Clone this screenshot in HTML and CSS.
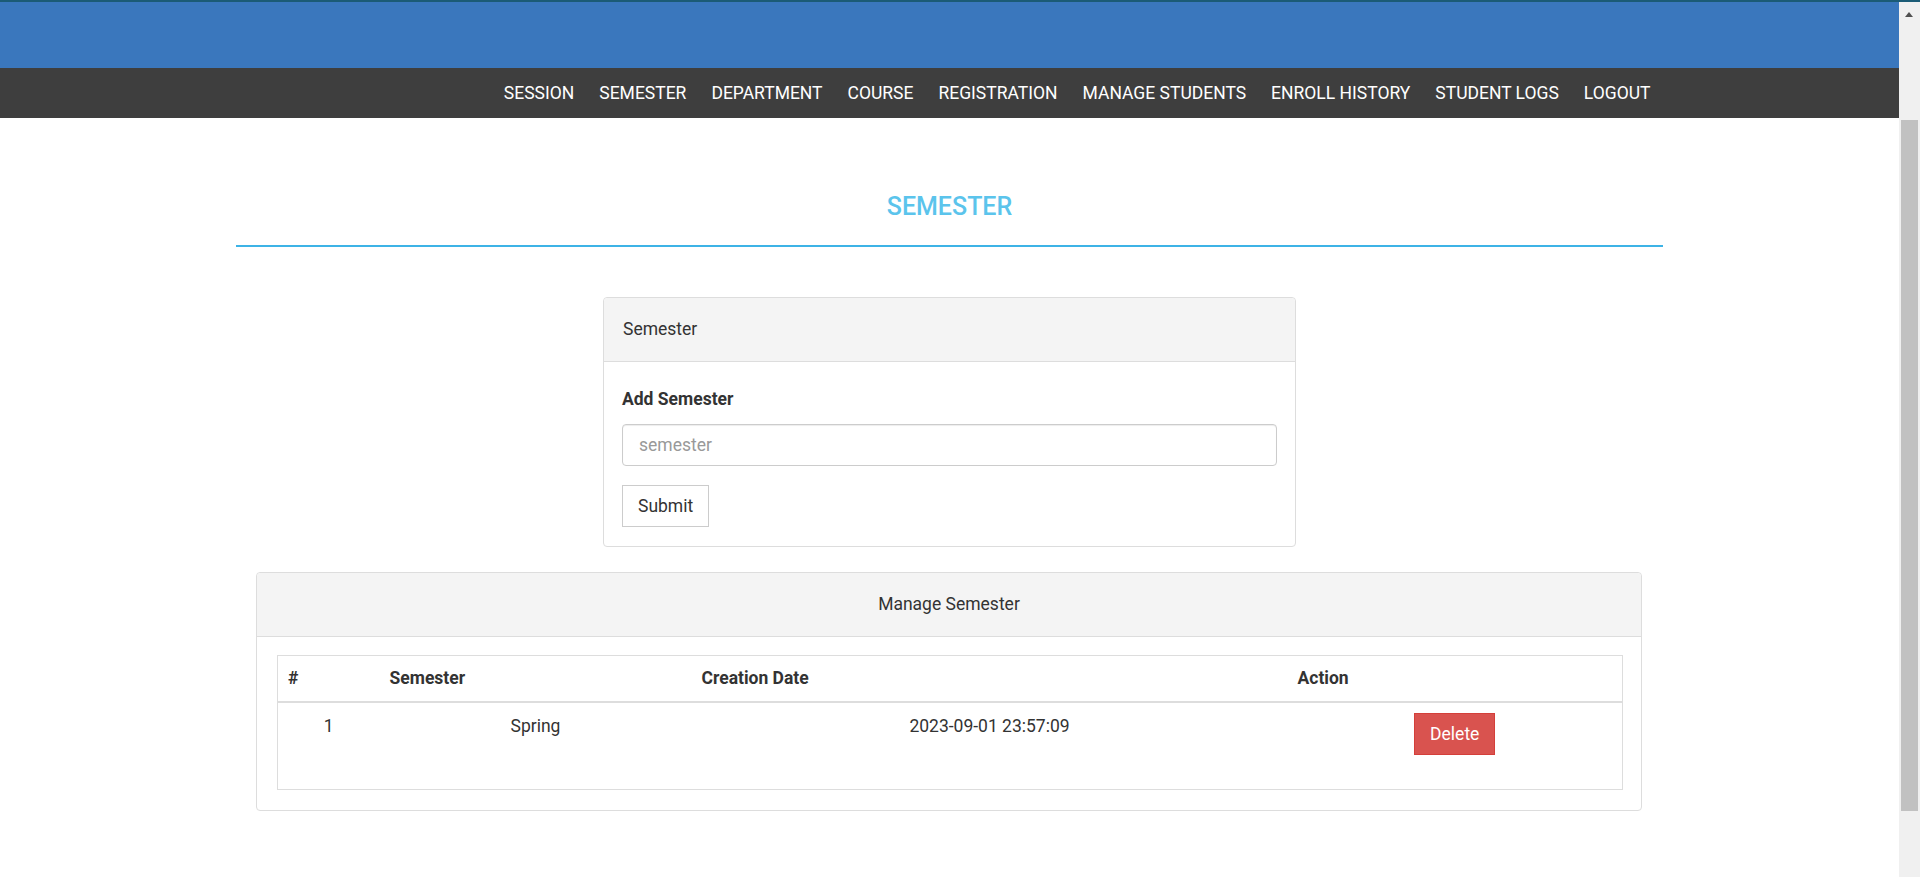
FILE: index.html
```html
<!DOCTYPE html>
<html lang="en">
<head>
<meta charset="utf-8">
<title>Semester</title>
<link rel="stylesheet" href="styles.css">
</head>
<body>
<div class="topline"></div>
<div class="frame">
  <div class="page">
    <header class="brandbar"></header>
    <nav class="menu">
      <div class="container">
        <ul class="menu-list">
          <li><a href="#">SESSION</a></li>
          <li><a href="#">SEMESTER</a></li>
          <li><a href="#">DEPARTMENT</a></li>
          <li><a href="#">COURSE</a></li>
          <li><a href="#">REGISTRATION</a></li>
          <li><a href="#">MANAGE STUDENTS</a></li>
          <li><a href="#">ENROLL HISTORY</a></li>
          <li><a href="#">STUDENT LOGS</a></li>
          <li><a href="#">LOGOUT</a></li>
        </ul>
      </div>
    </nav>
    <main class="container content">
      <h1 class="page-title">SEMESTER</h1>
      <div class="title-rule"></div>

      <section class="panel panel-form">
        <div class="panel-heading">Semester</div>
        <div class="panel-body">
          <label class="field-label" for="semester">Add Semester</label>
          <input class="field-input" id="semester" type="text" placeholder="semester">
          <button class="btn btn-default" type="button">Submit</button>
        </div>
      </section>

      <section class="panel panel-wide">
        <div class="panel-heading centered">Manage Semester</div>
        <div class="panel-body table-body">
          <table class="data-table">
            <colgroup>
              <col class="c1"><col class="c2"><col class="c3"><col class="c4">
            </colgroup>
            <thead>
              <tr><th>#</th><th>Semester</th><th>Creation Date</th><th>Action</th></tr>
            </thead>
            <tbody>
              <tr>
                <td>1</td>
                <td>Spring</td>
                <td>2023-09-01 23:57:09</td>
                <td><button class="btn btn-danger" type="button">Delete</button></td>
              </tr>
            </tbody>
          </table>
        </div>
      </section>
    </main>
  </div>
  <div class="scrollbar">
    <span class="arrow-up"></span>
    <span class="thumb"></span>
  </div>
</div>
</body>
</html>
```

FILE: styles.css
```css
html, body {
  margin: 0;
  padding: 0;
  height: 100%;
  overflow: hidden;
}
body {
  font-family: "Roboto", "Liberation Sans", sans-serif;
  font-size: 17.5px;
  line-height: 25px;
  color: #333;
  background: #fff;
  display: flex;
  flex-direction: column;
}
.topline {
  height: 2px;
  background: #1b5b76;
  flex: none;
}
.frame {
  flex: 1;
  display: flex;
  min-height: 0;
}
.page {
  flex: 1;
  min-width: 0;
}
.brandbar {
  height: 66px;
  background: #3a77bd;
}
.menu {
  height: 50px;
  background: #3e3e3e;
}
.container {
  width: 1427px;
  margin: 0 auto;
}
.menu-list {
  list-style: none;
  margin: 0;
  padding: 0;
  display: flex;
  justify-content: flex-end;
}
.menu-list a {
  display: block;
  padding: 0 12.5px;
  line-height: 50px;
  color: #fff;
  text-decoration: none;
  font-size: 17.5px;
}
.content {
  padding-top: 76px;
}
.page-title {
  margin: 0;
  text-align: center;
  font-size: 25px;
  line-height: 25px;
  font-weight: 500;
  color: #5bc4ec;
}
.title-rule {
  height: 2px;
  background: #3db3e6;
  margin-top: 26px;
}
.panel {
  border: 1px solid #ddd;
  border-radius: 4px;
  background: #fff;
}
.panel-form {
  width: 691px;
  margin: 50px auto 0;
}
.panel-wide {
  margin: 25px 21px 0 20px;
}
.panel-heading {
  background: #f4f4f4;
  border-bottom: 1px solid #ddd;
  border-radius: 4px 4px 0 0;
  padding: 19px 19px;
  line-height: 25px;
}
.panel-heading.centered {
  text-align: center;
}
.panel-body {
  padding: 25px 18px 19px;
}
.field-label {
  display: block;
  font-weight: 700;
  line-height: 24px;
}
.field-input {
  display: block;
  box-sizing: border-box;
  width: 100%;
  height: 42px;
  margin-top: 13px;
  padding: 0 16px;
  border: 1px solid #ccc;
  border-radius: 4px;
  font-family: inherit;
  font-size: 17.5px;
  color: #555;
  box-shadow: inset 0 1px 1px rgba(0,0,0,0.075);
}
.field-input::placeholder {
  color: #999;
}
.btn {
  display: inline-block;
  box-sizing: border-box;
  height: 42px;
  padding: 0 15px;
  font-family: inherit;
  font-size: 17.5px;
  line-height: 40px;
  border: 1px solid #ccc;
  border-radius: 0;
  cursor: pointer;
}
.btn-default {
  margin-top: 19px;
  background: #fff;
  color: #333;
}
.btn-danger {
  background: #d9534f;
  border-color: #d43f3a;
  color: #fff;
}
.table-body {
  padding: 18px 18px 20px 20px;
}
.data-table {
  width: 100%;
  table-layout: fixed;
  border-collapse: collapse;
  border: 1px solid #ddd;
}
.c1 { width: 102px; }
.c2 { width: 312px; }
.c3 { width: 596px; }
.data-table th {
  text-align: left;
  font-weight: 700;
  padding: 10px 10px 10px;
  line-height: 25px;
  border-bottom: 2px solid #ddd;
}
.data-table td {
  text-align: center;
  vertical-align: top;
  padding: 10px 10px 34px;
  line-height: 26px;
}
.scrollbar {
  width: 21px;
  flex: none;
  background: #f0f0f0;
  display: flex;
  flex-direction: column;
}
.arrow-up {
  width: 0;
  height: 0;
  margin: 10px 0 0 6px;
  border-left: 4.5px solid transparent;
  border-right: 4.5px solid transparent;
  border-bottom: 5px solid #505050;
}
.thumb {
  margin: 103px 0 0 2px;
  width: 17px;
  height: 691px;
  background: #c1c1c1;
}
```
